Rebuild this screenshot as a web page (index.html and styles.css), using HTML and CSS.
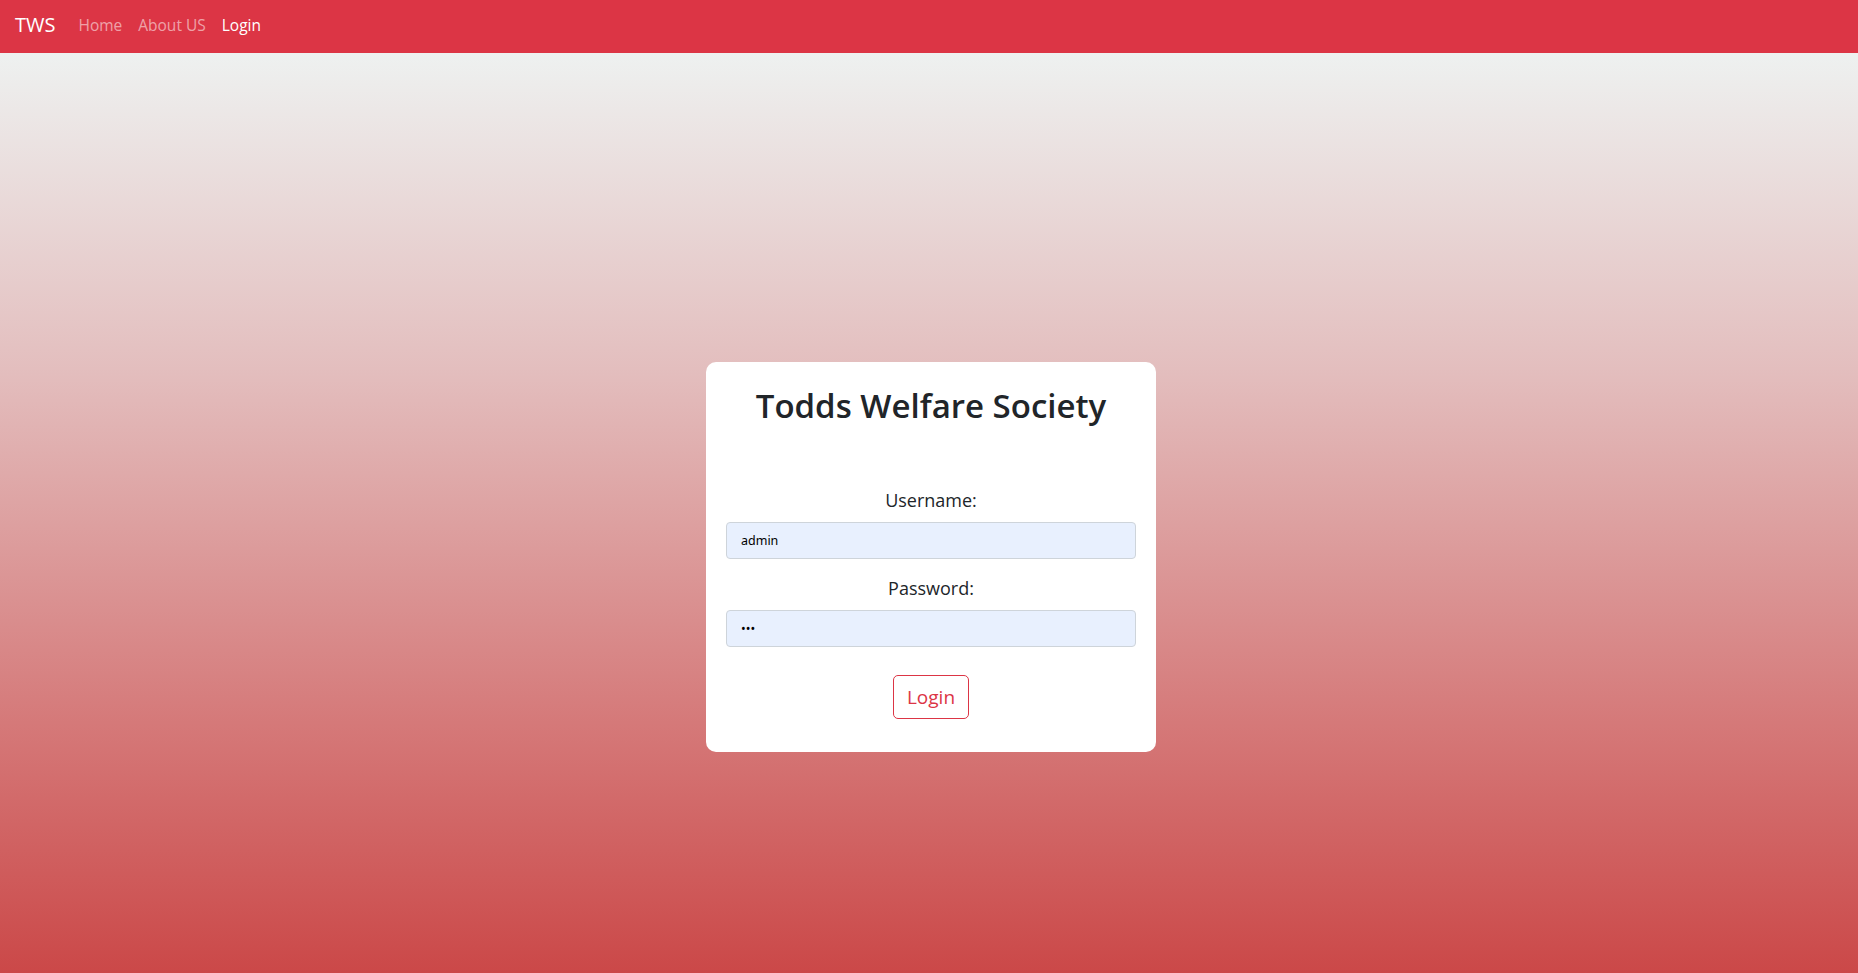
FILE: index.html
```html
<!DOCTYPE html>
<html lang="en">
<head>
<meta charset="utf-8">
<title>TWS - Login</title>
<link rel="stylesheet" href="styles.css">
</head>
<body>
<nav class="navbar">
  <a class="brand" href="#">TWS</a>
  <ul class="nav">
    <li><a class="nav-link" href="#">Home</a></li>
    <li><a class="nav-link" href="#">About US</a></li>
    <li><a class="nav-link active" href="#">Login</a></li>
  </ul>
</nav>
<main class="main">
  <div class="card">
    <h1 class="title">Todds Welfare Society</h1>
    <form class="form">
      <label class="label" for="u">Username:</label>
      <input class="input" id="u" type="text" value="admin">
      <label class="label" for="p">Password:</label>
      <input class="input" id="p" type="password" value="abc">
      <button class="btn" type="button">Login</button>
    </form>
  </div>
</main>
</body>
</html>
```
FILE: styles.css
```css
* { box-sizing: border-box; }
html, body { margin: 0; padding: 0; }
body {
  font-family: "Open Sans", "Noto Sans", sans-serif;
  color: #212529;
  height: 973px;
  overflow: hidden;
}
.navbar {
  height: 53px;
  background: #dc3545;
  display: flex;
  align-items: center;
  padding: 0 15px 4px;
}
.brand {
  color: #fff;
  text-decoration: none;
  font-size: 20px;
  margin-right: 15px;
}
.nav {
  list-style: none;
  display: flex;
  margin: 0;
  padding: 0;
}
.nav-link {
  display: block;
  padding: 8px 8px;
  color: rgba(255,255,255,0.55);
  text-decoration: none;
  font-size: 15.5px;
}
.nav-link.active { color: #fff; }
.main {
  height: calc(100% - 53px);
  background: linear-gradient(to bottom, #eef1f0 0%, #e3bdbd 35%, #cb4848 100%);
  display: flex;
  justify-content: center;
  padding-top: 309px;
}
.card {
  width: 450px;
  height: 390px;
  background: #fff;
  border-radius: 10px;
  padding: 20px;
  margin-left: 4px;
  display: flex;
  flex-direction: column;
  align-items: center;
}
.title {
  margin: 0;
  font-size: 33px;
  font-weight: 600;
  line-height: 1.2;
  margin-top: 4px;
}
.form {
  width: 100%;
  display: flex;
  flex-direction: column;
  align-items: center;
  margin-top: 61px;
}
.label {
  font-size: 18px;
  line-height: 27px;
  margin-bottom: 8px;
}
.input {
  width: 100%;
  height: 37px;
  background: #e8f0fe;
  border: 1px solid #ced4da;
  border-radius: 4px;
  padding: 0 14px;
  font-family: "Noto Sans", sans-serif;
  font-size: 12.5px;
  color: #000;
  margin-bottom: 16px;
}
.btn {
  margin-top: 12px;
  background: #fff;
  border: 1px solid #dc3545;
  color: #dc3545;
  border-radius: 5px;
  font-family: "Open Sans", sans-serif;
  font-size: 19px;
  width: 76px;
  height: 44px;
  padding: 0;
}
```
